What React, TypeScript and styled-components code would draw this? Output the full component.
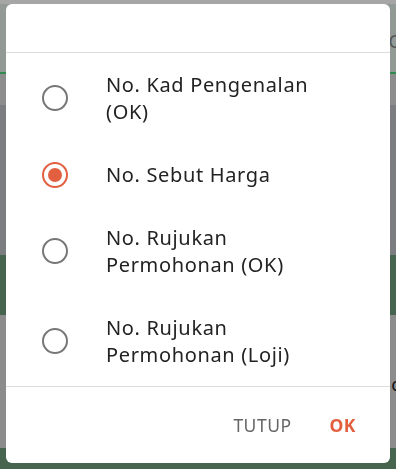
import React, {useState} from 'react';
import styled, {createGlobalStyle} from 'styled-components';

const GlobalStyle = createGlobalStyle`
  html, body {
    margin: 0;
    padding: 0;
  }
  body {
    font-family: 'Noto Sans', 'Open Sans', sans-serif;
    background: #a6a6a6;
    overflow: hidden;
  }
`;

const ORANGE = '#e2603f';

const Backdrop = styled.div`
  width: 396px;
  height: 469px;
  display: flex;
  flex-direction: column;
`;

const Band = styled.div<{$h: number; $bg: string}>`
  height: ${(p) => p.$h}px;
  background: ${(p) => p.$bg};
  flex-shrink: 0;
  position: relative;
`;

const EdgeGlyph = styled.span<{$top: number; $color: string}>`
  position: absolute;
  right: -4px;
  top: ${(p) => p.$top}px;
  font-size: 18px;
  line-height: 1;
  color: ${(p) => p.$color};
`;

const Dialog = styled.div`
  position: fixed;
  left: 6px;
  top: 4px;
  width: 384px;
  height: 459px;
  background: #fff;
  border-radius: 6px;
  display: flex;
  flex-direction: column;
  overflow: hidden;
`;

const Header = styled.div`
  height: 48px;
  border-bottom: 1px solid #dcdcdc;
  flex-shrink: 0;
`;

const OptionList = styled.div`
  display: flex;
  flex-direction: column;
  border-bottom: 1px solid #dcdcdc;
`;

const Option = styled.label`
  display: flex;
  align-items: center;
  padding: 18px 20px 18px 36px;
  cursor: pointer;
`;

const Radio = styled.span<{$checked: boolean}>`
  width: 26px;
  height: 26px;
  box-sizing: border-box;
  border-radius: 50%;
  border: 2px solid ${(p) => (p.$checked ? ORANGE : '#777')};
  display: flex;
  align-items: center;
  justify-content: center;
  flex-shrink: 0;

  &::after {
    content: '';
    width: 14px;
    height: 14px;
    border-radius: 50%;
    background: ${ORANGE};
    display: ${(p) => (p.$checked ? 'block' : 'none')};
  }
`;

const OptionText = styled.span`
  margin-left: 38px;
  font-size: 20px;
  line-height: 27px;
  color: #222;
  letter-spacing: 0.65px;
  width: 225px;
`;

const Footer = styled.div`
  flex: 1;
  display: flex;
  align-items: center;
  justify-content: flex-end;
  gap: 38px;
  padding-right: 34px;
`;

const FooterButton = styled.button<{$primary?: boolean}>`
  border: none;
  background: none;
  padding: 0;
  font-family: inherit;
  font-size: 17.5px;
  letter-spacing: 0.5px;
  font-weight: ${(p) => (p.$primary ? 700 : 400)};
  color: ${(p) => (p.$primary ? ORANGE : '#666')};
  cursor: pointer;
`;

const options = [
  'No. Kad Pengenalan (OK)',
  'No. Sebut Harga',
  'No. Rujukan Permohonan (OK)',
  'No. Rujukan Permohonan (Loji)',
];

export default function App() {
  const [selected, setSelected] = useState(1);

  return (
    <>
      <GlobalStyle />
      <Backdrop>
        <Band $h={4} $bg="#a6a6a6" />
        <Band $h={68} $bg="#939995">
          <EdgeGlyph $top={28} $color="#555">C</EdgeGlyph>
        </Band>
        <Band $h={2} $bg="#2f8a4f" />
        <Band $h={31} $bg="#8d8d8d" />
        <Band $h={150} $bg="#7c7d81" />
        <Band $h={60} $bg="#47644f" />
        <Band $h={133} $bg="#8c8c8c">
          <EdgeGlyph $top={60} $color="#111">c</EdgeGlyph>
        </Band>
        <Band $h={21} $bg="#47644f" />
      </Backdrop>

      <Dialog>
        <Header />
        <OptionList>
          {options.map((text, index) => (
            <Option key={text} onClick={() => setSelected(index)}>
              <Radio $checked={selected === index} />
              <OptionText>{text}</OptionText>
            </Option>
          ))}
        </OptionList>
        <Footer>
          <FooterButton>TUTUP</FooterButton>
          <FooterButton $primary>OK</FooterButton>
        </Footer>
      </Dialog>
    </>
  );
}
